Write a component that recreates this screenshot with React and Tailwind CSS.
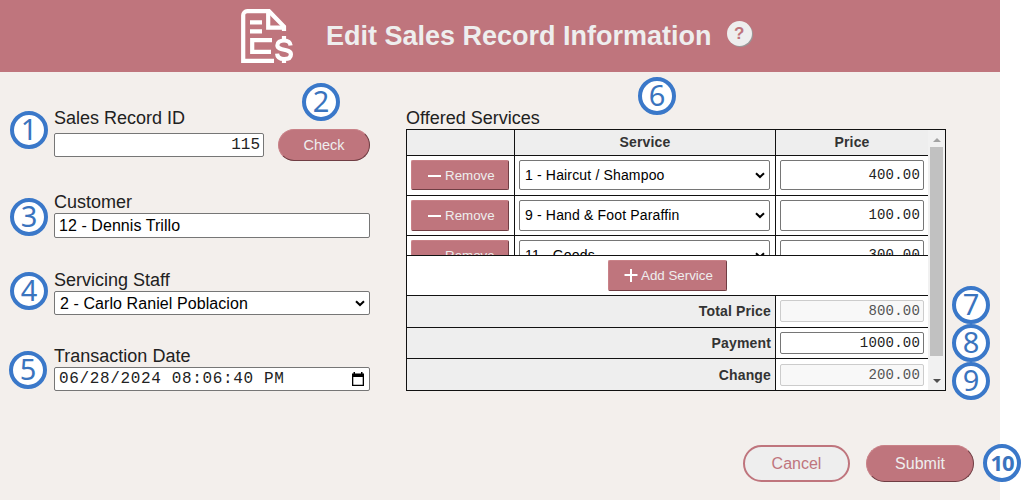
import React from "react";

const rows = [
  { service: "1 - Haircut / Shampoo", price: "400.00", h: "h-10", c: "h-[30px]" },
  { service: "9 - Hand & Foot Paraffin", price: "100.00", h: "h-10", c: "h-[31px]" },
  { service: "11 - Goods", price: "300.00", h: "h-10", c: "h-[31px]" },
];

const totals = [
  { label: "Total Price", value: "800.00", h: "h-8 border-b", lead: "leading-[30px]", pad: "pt-1", disabled: true },
  { label: "Payment", value: "1000.00", h: "h-[31px] border-b", lead: "leading-[30px]", pad: "pt-1", disabled: false },
  { label: "Change", value: "200.00", h: "h-[31px]", lead: "leading-[32px]", pad: "pt-[5px]", disabled: true },
];

const badges = [
  { n: 1, pos: "left-[10px] top-[111px]" },
  { n: 2, pos: "left-[302px] top-[83px]" },
  { n: 3, pos: "left-[10px] top-[198px]" },
  { n: 4, pos: "left-[10px] top-[272px]" },
  { n: 5, pos: "left-[9px] top-[351px]" },
  { n: 6, pos: "left-[638px] top-[77px]" },
  { n: 7, pos: "left-[952px] top-[286px]" },
  { n: 8, pos: "left-[952px] top-[324px]" },
  { n: 9, pos: "left-[952px] top-[362px]" },
  { n: 10, pos: "left-[983px] top-[444px]" },
];

function Badge({ n, pos }) {
  const size = n === 10 ? "text-[22px] font-bold tracking-[-1px] pb-[2px]" : "text-[29px] pb-[3px]";
  return (
    <div className={`absolute flex h-[38px] w-[38px] items-center justify-center rounded-full border-4 border-[#3a78c9] bg-white font-['Noto_Sans',sans-serif] leading-none text-[#3a74be] ${pos} ${size}`}>
      <span>{n}</span>
    </div>
  );
}

function Chevron() {
  return (
    <svg className="shrink-0" width="10" height="7" viewBox="0 0 10 7" fill="none" stroke="#000" strokeWidth="2">
      <path d="M1 1.2 5 5l4-3.8" />
    </svg>
  );
}

function InvoiceIcon() {
  return (
    <svg width="54" height="56" viewBox="0 0 54 56" fill="none" stroke="#fff" strokeWidth="4.2">
      <path d="M34 52.9H3.2V7.2a4 4 0 0 1 4-4H29L44 18.6V23" />
      <path d="M28.2 3v16.6h17" />
      <path d="M10 14.4h12M10 23.4h12" />
      <path d="M32 32.1H12.2v11.8H31" />
      <path d="M50.6 37.4c-.4-3.2-2.8-4.9-6.6-4.9-3.900 0-6.600 1.800-6.600 4.700 0 6.300 13.500 2.900 13.500 9.200 0 3-2.700 4.600-6.800 4.600-4.300 0-6.800-2-7-5.400" />
      <path d="M44 28v5M44 50v5" />
    </svg>
  );
}

function Field({ label, gap, children }) {
  return (
    <div className={gap}>
      <div className="h-[22px] text-[18px] leading-[22px] text-[#212121]">{label}</div>
      {children}
    </div>
  );
}

export default function App() {
  return (
    <div className="relative h-[500px] w-[1026px] overflow-hidden bg-white font-['Liberation_Sans',Arial,sans-serif]">
      <div className="flex h-full w-[1000px] flex-col bg-[#f3efec]">
        <header className="flex h-[72px] items-center bg-[#bf757d] pl-[240px]">
          <div className="h-14 w-[54px]"><InvoiceIcon /></div>
          <h1 className="ml-8 whitespace-nowrap text-[27px] font-bold leading-8 text-[#eee]">Edit Sales Record Information</h1>
          <div className="mb-[5px] ml-[15px] flex h-[25px] w-[25px] items-center justify-center rounded-full bg-[#eee] text-[17px] font-bold leading-none text-[#bf757d] shadow-[1px_1px_0_#999]">?</div>
        </header>

        <main className="flex h-[373px] pl-[54px]">
          <section className="w-[316px] pt-[35px]">
            <Field label="Sales Record ID" gap="h-[84px]">
              <div className="flex items-center justify-between">
                <div className="flex h-6 w-[210px] items-center justify-end rounded-[2px] border border-[#767676] bg-white pr-[3px] font-['Liberation_Mono',monospace] text-[16px] leading-5 text-[#222]">115</div>
                <button className="h-8 w-[92px] rounded-full border border-t-[#c98288] border-l-[#c98288] border-r-[#6f3d43] border-b-[#6f3d43] bg-[#bf757d] text-[14.5px] leading-5 text-[#eee]">Check</button>
              </div>
            </Field>
            <Field label="Customer" gap="h-[78px]">
              <div className="flex h-[25px] items-center rounded-[2px] border border-[#767676] bg-white pl-1 text-[16px] leading-5 tracking-[0.06px] text-black">12 - Dennis Trillo</div>
            </Field>
            <Field label="Servicing Staff" gap="h-[76px]">
              <div className="flex h-6 items-center justify-between rounded-[2px] border border-[#767676] bg-white pl-[5px] pr-1 text-[16px] leading-5 tracking-[0.08px] text-black">
                <span className="pt-px">2 - Carlo Raniel Poblacion</span><Chevron />
              </div>
            </Field>
            <Field label="Transaction Date" gap="h-12">
              <div className="flex h-6 items-center justify-between rounded-[2px] border border-[#767676] bg-white pl-1 pr-1 font-['Liberation_Mono',monospace] text-[16px] leading-5 tracking-[0.65px] text-[#222]">
                <span>06/28/2024 08:06:40 PM</span>
                <svg width="14" height="14" viewBox="0 0 14 14" fill="#000">
                  <path fillRule="evenodd" d="M2.5 0H4v1.5h6V0h1.5v1.5H13V14H1V1.5h1.500zM2.300 5v7.700h9.400V5z" />
                </svg>
              </div>
            </Field>
          </section>

          <section className="ml-9 w-[540px] pt-[35px]">
            <div className="h-[22px] text-[18px] leading-[22px] text-[#212121]">Offered Services</div>
            <div className="flex h-[262px] border border-[#111] bg-white">
              <div className="w-[521px]">
                <div className="flex h-[26px] border-b border-[#111] bg-[#eee] text-center text-[14px] font-bold leading-[25px] tracking-[0.15px] text-[#333]">
                  <div className="w-[108px] border-r border-[#111]" />
                  <div className="w-[261px] border-r border-[#111]">Service</div>
                  <div className="flex-1">Price</div>
                </div>
                <div className="h-[100px] overflow-hidden border-b border-[#111]">
                  {rows.map((r) => (
                    <div key={r.service} className={`flex border-b border-[#111] ${r.h}`}>
                      <div className="w-[108px] border-r border-[#111] pl-1 pr-[5px] pt-1">
                        <button className={`flex w-full items-center rounded-[2px] border border-t-[#c98288] border-l-[#c98288] border-r-[#6f3d43] border-b-[#6f3d43] bg-[#bf757d] pl-4 pt-px text-[13.33px] text-[#eee] ${r.c}`}>
                          <span className="mr-1 h-[2px] w-[13px] bg-white" />Remove
                        </button>
                      </div>
                      <div className="w-[261px] border-r border-[#111] pl-1 pr-[5px] pt-1">
                        <div className={`flex items-center justify-between rounded-[2px] border border-[#767676] bg-white pl-[5px] pr-1 text-[14px] tracking-[0.16px] text-black ${r.c}`}>
                          <span>{r.service}</span><Chevron />
                        </div>
                      </div>
                      <div className="flex-1 px-1 pt-1">
                        <div className={`flex items-center justify-end rounded-[2px] border border-[#767676] bg-white pr-[3px] font-['Liberation_Mono',monospace] text-[14px] tracking-[0.2px] text-[#222] ${r.c}`}>{r.price}</div>
                      </div>
                    </div>
                  ))}
                </div>
                <div className="flex h-10 justify-center border-b border-[#111] pt-1">
                  <button className="flex h-[31px] w-[119px] items-center rounded-[2px] border border-t-[#c98288] border-l-[#c98288] border-r-[#6f3d43] border-b-[#6f3d43] bg-[#bf757d] pl-[15px] pt-px text-[13.33px] text-[#eee]">
                    <svg className="mr-[3px]" width="14" height="14" viewBox="0 0 14 14" stroke="#fff" strokeWidth="2"><path d="M.5 6h13M7 0v13" /></svg>
                    Add Service
                  </button>
                </div>
                {totals.map((t) => (
                  <div key={t.label} className={`flex border-[#111] ${t.h}`}>
                    <div className={`w-[369px] border-r border-[#111] bg-[#eee] pr-1 text-right text-[14px] font-bold tracking-[0.15px] text-[#333] ${t.lead}`}>{t.label}</div>
                    <div className={`flex-1 px-1 ${t.pad}`}>
                      <div className={`flex h-[22px] items-center justify-end rounded-[2px] border pr-[3px] font-['Liberation_Mono',monospace] text-[14px] tracking-[0.2px] ${t.disabled ? "border-[#ccc] bg-[#f8f8f8] text-[#545454]" : "border-[#767676] bg-white text-[#222]"}`}>{t.value}</div>
                    </div>
                  </div>
                ))}
              </div>
              <div className="flex w-[17px] flex-col items-center bg-[#f1f1f1]">
                <div className="flex h-[17px] items-center justify-center pt-[2px]">
                  <svg width="8" height="4" viewBox="0 0 8 4"><path d="M0 4 4 0l4 4z" fill="#a3a3a3" /></svg>
                </div>
                <div className="h-[209px] w-[13px] bg-[#c1c1c1]" />
                <div className="flex flex-1 items-center justify-center pt-[15px]">
                  <svg width="8" height="4" viewBox="0 0 8 4"><path d="M0 0h8L4 4z" fill="#505050" /></svg>
                </div>
              </div>
            </div>
          </section>
        </main>

        <footer className="flex justify-end gap-4 pr-[26px]">
          <button className="h-[37px] w-[107px] rounded-full border-2 border-[#bf757d] bg-[#eee] text-[16px] leading-5 text-[#bf757d]">Cancel</button>
          <button className="h-[37px] w-[108px] rounded-full border border-t-[#c98288] border-l-[#c98288] border-r-[#6f3d43] border-b-[#6f3d43] bg-[#bf757d] text-[16px] leading-5 text-[#eee]">Submit</button>
        </footer>
      </div>
      {badges.map((b) => <Badge key={b.n} n={b.n} pos={b.pos} />)}
    </div>
  );
}
